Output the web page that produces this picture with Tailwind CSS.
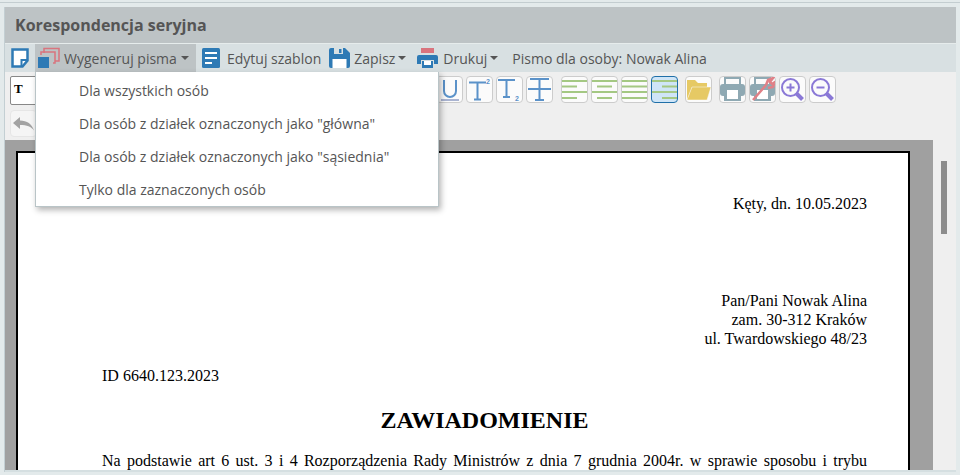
<!DOCTYPE html>
<html lang="pl">
<head>
  <meta charset="UTF-8" />
  <title>Korespondencja seryjna</title>
  <script src="https://cdn.jsdelivr.net/npm/@tailwindcss/browser@4"></script>
</head>
<body class="w-[960px] h-[475px] overflow-hidden bg-[#e3eaeb] font-['Open_Sans',sans-serif] text-[#555]">

  <!-- top edge of the window -->
  <div class="h-[7px] border-b-0 pt-[2px]"><div class="h-px bg-[#c3cdd0]"></div></div>

  <div class="relative ml-[4px] mr-[4px] h-[465px] border-l border-[#c3cfd3] flex flex-col">
    <!-- title -->
    <div class="h-[37px] shrink-0 bg-[#bdc3c5] pl-[10px] flex items-center border-b border-[#e6ecec]">
      <h1 class="text-[16px] font-bold text-[#555]">Korespondencja seryjna</h1>
    </div>

    <!-- main toolbar -->
    <div class="h-[28px] shrink-0 bg-[#d8e0e2] flex items-center text-[14px]">
      <div class="w-[30px] flex justify-center">
        <svg width="20" height="20" viewBox="0 0 20 20"><path d="M2.500 1.500h15v11l-5 6h-10z" fill="#fff" stroke="#2e7ab5" stroke-width="2.500"/><path d="M11.500 18v-6h6" fill="none" stroke="#2e7ab5" stroke-width="2"/></svg>
      </div>
      <div class="h-full w-[161px] bg-[#bdc3c5] flex items-center pl-[3px]">
        <svg width="22" height="22" viewBox="0 0 22 22"><path d="M6 6V1.500h15V14h-4" fill="none" stroke="#d9747e" stroke-width="1.500"/><path d="M3 8V5h14v11h-2" fill="none" stroke="#d9747e" stroke-width="1.500"/><rect x="0" y="10" width="11" height="11" fill="#2e7ab5"/></svg>
        <span class="ml-[4px]">Wygeneruj pisma</span>
        <span class="ml-[4px] w-0 h-0 border-x-[4px] border-x-transparent border-t-[4px] border-t-[#555]"></span>
      </div>
      <div class="ml-[6px] flex items-center">
        <svg width="18" height="20" viewBox="0 0 18 20"><rect width="18" height="20" rx="1.500" fill="#2e7ab5"/><path d="M3 5h12M3 10h12M3 15h7" stroke="#fff" stroke-width="2"/></svg>
        <span class="ml-[7px]">Edytuj szablon</span>
      </div>
      <div class="ml-[8px] flex items-center">
        <svg width="21" height="20" viewBox="0 0 21 20"><path d="M0 2a2 2 0 0 1 2-2h14l5 5v13a2 2 0 0 1-2 2H2a2 2 0 0 1-2-2z" fill="#2e7ab5"/><rect x="5" y="0" width="9" height="6" fill="#d8e0e2"/><rect x="10" y="1" width="2.500" height="4" fill="#2e7ab5"/><rect x="3.500" y="11" width="14" height="9" fill="#fff"/></svg>
        <span class="ml-[4px]">Zapisz</span>
        <span class="ml-[3px] w-0 h-0 border-x-[4px] border-x-transparent border-t-[4px] border-t-[#555]"></span>
      </div>
      <div class="ml-[11px] flex items-center">
        <svg width="21" height="20" viewBox="0 0 21 20"><rect x="4" y="0" width="13" height="5" fill="#d9747e"/><path d="M2 7h17a2 2 0 0 1 2 2v7h-4v-4H4v4H0V9a2 2 0 0 1 2-2z" fill="#2e7ab5"/><rect x="5" y="13" width="11" height="7" fill="#2e7ab5"/><rect x="7" y="13" width="7" height="4" fill="#fff"/></svg>
        <span class="ml-[5px]">Drukuj</span>
        <span class="ml-[3px] w-0 h-0 border-x-[4px] border-x-transparent border-t-[4px] border-t-[#555]"></span>
      </div>
      <span class="ml-[14px]">Pismo dla osoby: Nowak Alina</span>
    </div>

    <!-- editor -->
    <div class="relative flex-1 min-h-0 bg-[#efefef] flex flex-col">
      <!-- format buttons -->
      <div class="h-[68px] shrink-0 pt-[4px] pl-[5px]">
        <div class="flex items-start">
          <div class="w-[60px] h-[29px] bg-white border border-[#888] rounded-[2px] pl-[3px] pt-[2px] font-['Liberation_Serif',serif] text-[13px] font-bold text-black">T</div>
          <div class="ml-[366px] flex gap-[3px]">
            <div class="w-[27px] h-[27px] flex items-center justify-center bg-[#fbfbfb] border border-[#ccc] rounded-[4px]">
              <svg width="21" height="23" viewBox="0 0 21 23"><path d="M5 2v11a6 6 0 0 0 12 0V2" fill="none" stroke="#5b92c9" stroke-width="2"/><path d="M2 22h18" stroke="#5b6fa8" stroke-width="1"/></svg>
            </div>
            <div class="w-[27px] h-[27px] flex items-center justify-center bg-[#fbfbfb] border border-[#ccc] rounded-[4px]">
              <svg width="25" height="25" viewBox="0 0 25 25"><path d="M2 5.500h17M10.500 5.500v17M7 22.500h7" fill="none" stroke="#5b92c9" stroke-width="2"/><text x="19" y="7" font-size="7" font-weight="bold" fill="#5b92c9" font-family="Liberation Sans">2</text></svg>
            </div>
            <div class="w-[27px] h-[27px] flex items-center justify-center bg-[#fbfbfb] border border-[#ccc] rounded-[4px]">
              <svg width="25" height="25" viewBox="0 0 25 25"><path d="M1 3h17M9.500 3v17M6 20h7" fill="none" stroke="#5b92c9" stroke-width="2"/><text x="18" y="24" font-size="7" font-weight="bold" fill="#5b92c9" font-family="Liberation Sans">2</text></svg>
            </div>
            <div class="w-[27px] h-[27px] flex items-center justify-center bg-[#fbfbfb] border border-[#ccc] rounded-[4px]">
              <svg width="25" height="25" viewBox="0 0 25 25"><path d="M3 2h19M12.500 2v21M8 23h9M1 12h23" fill="none" stroke="#5b92c9" stroke-width="2"/></svg>
            </div>
          </div>
          <div class="ml-[8px] flex gap-[3px]">
            <div class="w-[27px] h-[27px] flex items-center justify-center bg-[#fbfbfb] border border-[#ccc] rounded-[4px]">
              <svg width="25" height="21" viewBox="0 0 25 21"><path d="M0 2h25M0 7.500h15M0 13h25M0 19h15" stroke="#a4c883" stroke-width="2"/></svg>
            </div>
            <div class="w-[27px] h-[27px] flex items-center justify-center bg-[#fbfbfb] border border-[#ccc] rounded-[4px]">
              <svg width="25" height="21" viewBox="0 0 25 21"><path d="M0 2h25M5 7.500h15M0 13h25M5 19h15" stroke="#a4c883" stroke-width="2"/></svg>
            </div>
            <div class="w-[27px] h-[27px] flex items-center justify-center bg-[#fbfbfb] border border-[#ccc] rounded-[4px]">
              <svg width="25" height="21" viewBox="0 0 25 21"><path d="M0 2h25M0 7.500h25M0 13h25M0 19h25" stroke="#a4c883" stroke-width="2"/></svg>
            </div>
            <div class="w-[27px] h-[27px] flex items-center justify-center bg-[#cfe5f7] border border-[#1f6fa8] rounded-[4px]">
              <svg width="25" height="21" viewBox="0 0 25 21"><path d="M0 2h25M10 7.500h15M0 13h25M10 19h15" stroke="#a4c883" stroke-width="2"/></svg>
            </div>
          </div>
          <div class="ml-[7px] w-[27px] h-[27px] flex items-center justify-center bg-[#fbfbfb] border border-[#ccc] rounded-[4px]">
            <svg width="25" height="23" viewBox="0 0 25 23"><path d="M1 22V2h8l3 3h9v4H6z" fill="#e6c964"/><path d="M1 22L6 9h19l-4 13z" fill="#e6c964" stroke="#fbfbfb" stroke-width="0.500"/></svg>
          </div>
          <div class="ml-[7px] flex gap-[3px]">
            <div class="w-[27px] h-[27px] flex items-center justify-center bg-[#fbfbfb] border border-[#ccc] rounded-[4px]">
              <svg width="25" height="25" viewBox="0 0 25 25"><rect x="5" y="1" width="15" height="8" fill="none" stroke="#8fa9b3" stroke-width="2"/><rect x="0" y="7" width="25" height="12" rx="3" fill="#8fa9b3"/><rect x="4" y="14" width="17" height="10" fill="#8fa9b3"/><rect x="7" y="13" width="11" height="9" fill="#fff"/></svg>
            </div>
            <div class="w-[27px] h-[27px] flex items-center justify-center bg-[#fbfbfb] border border-[#ccc] rounded-[4px]">
              <svg width="25" height="25" viewBox="0 0 25 25"><rect x="5" y="1" width="15" height="8" fill="none" stroke="#8fa9b3" stroke-width="2"/><rect x="0" y="7" width="25" height="12" rx="3" fill="#8fa9b3"/><rect x="4" y="14" width="17" height="10" fill="#8fa9b3"/><rect x="7" y="13" width="11" height="9" fill="#fff"/><path d="M3 23L16 8M16 8l2-5 5-2-3 4 2 2 3-2-2 5-5 1" fill="none" stroke="#e08087" stroke-width="2.500"/></svg>
            </div>
            <div class="w-[27px] h-[27px] flex items-center justify-center bg-[#fbfbfb] border border-[#ccc] rounded-[4px]">
              <svg width="25" height="25" viewBox="0 0 25 25"><circle cx="10.500" cy="10.500" r="8.500" fill="none" stroke="#8a78d6" stroke-width="2"/><path d="M6.500 10.500h8M10.500 6.500v8" stroke="#8a78d6" stroke-width="2"/><path d="M16.500 16.500l6 6" stroke="#8a78d6" stroke-width="4"/></svg>
            </div>
            <div class="w-[27px] h-[27px] flex items-center justify-center bg-[#fbfbfb] border border-[#ccc] rounded-[4px]">
              <svg width="25" height="25" viewBox="0 0 25 25"><circle cx="10.500" cy="10.500" r="8.500" fill="none" stroke="#8a78d6" stroke-width="2"/><path d="M6.500 10.500h8" stroke="#8a78d6" stroke-width="2"/><path d="M16.500 16.500l6 6" stroke="#8a78d6" stroke-width="4"/></svg>
            </div>
          </div>
        </div>
        <div class="mt-[5px] w-[27px] h-[27px] flex items-center justify-center bg-[#f5f5f5] border border-[#e6e6e6] rounded-[4px]">
          <svg width="21" height="14" viewBox="0 0 21 14"><path d="M0 6l7-6v3.500c7 0 12 3.500 14 10-3-4-7-5.500-14-5.500V12z" fill="#a3a3a3"/></svg>
        </div>
      </div>

      <!-- document view -->
      <div class="flex flex-1 min-h-0 border-b-2 border-[#d5dfe1]">
        <div class="w-[928px] bg-[#a0a0a0] pt-[11px] pl-[11px] overflow-hidden">
          <div class="w-[894px] h-[400px] bg-white border-2 border-black border-b-0 border-r-2 font-['Liberation_Serif',serif] text-[16px] leading-[19px] text-black pl-[84px] pr-[41px] pt-[41px]">
            <p class="text-right">Kęty, dn. 10.05.2023</p>
            <p class="text-right mt-[78px]">Pan/Pani Nowak Alina</p>
            <p class="text-right">zam. 30-312 Kraków</p>
            <p class="text-right">ul. Twardowskiego 48/23</p>
            <p class="mt-[18px]">ID 6640.123.2023</p>
            <p class="mt-[21px] text-center text-[24px] leading-[28px] font-bold">ZAWIADOMIENIE</p>
            <p class="mt-[17px] [text-align-last:justify]">Na podstawie art 6 ust. 3 i 4 Rozporządzenia Rady Ministrów z dnia 7 grudnia 2004r. w sprawie sposobu i trybu</p>
          </div>
        </div>
        <div class="flex-1 pl-[8px] pt-[21px]">
          <div class="w-[6px] h-[73px] bg-[#8c8c8c]"></div>
        </div>
      </div>

      <!-- dropdown -->
      <div class="absolute left-[30px] top-0 w-[404px] h-[135px] bg-white border border-t-0 border-[#b9c4c7] shadow-[2px_3px_6px_rgba(0,0,0,0.3)] text-[14px] pt-[2px]">
        <div class="h-[33px] pl-[43px] flex items-center">Dla wszystkich osób</div>
        <div class="h-[33px] pl-[43px] flex items-center">Dla osób z działek oznaczonych jako "główna"</div>
        <div class="h-[33px] pl-[43px] flex items-center">Dla osób z działek oznaczonych jako "sąsiednia"</div>
        <div class="h-[33px] pl-[43px] flex items-center">Tylko dla zaznaczonych osób</div>
      </div>
    </div>
  </div>
</body>
</html>
